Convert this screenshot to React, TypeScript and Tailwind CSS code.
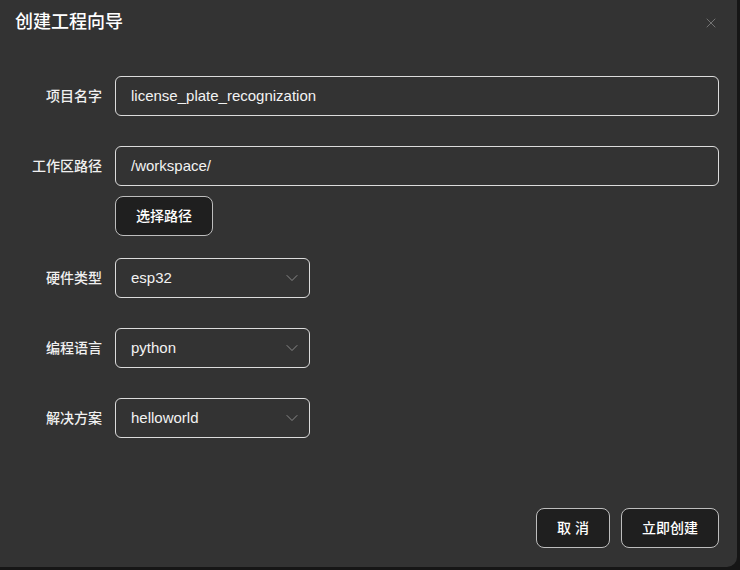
import { ChevronDown, X } from "lucide-react"

const font = "font-['Liberation_Sans','Noto_Sans_CJK_SC',sans-serif]"

function Label({ children }: { children: React.ReactNode }) {
  return (
    <div className="w-[102px] shrink-0 text-right text-[14px] font-medium text-[#f0f0f0]">
      {children}
    </div>
  )
}

function TextField({ value }: { value: string }) {
  return (
    <div className="flex h-[40px] w-[604px] items-center rounded-[6px] border border-[#dcdcdc] px-[15px] text-[15px] text-[#f2f2f2]">
      {value}
    </div>
  )
}

function SelectField({ value }: { value: string }) {
  return (
    <div className="flex h-[40px] w-[195px] items-center justify-between rounded-[6px] border border-[#dcdcdc] pl-[15px] pr-[7px] text-[15px] text-[#f2f2f2]">
      <span>{value}</span>
      <ChevronDown size={20} strokeWidth={1} className="text-[#9a9a9a]" />
    </div>
  )
}

function Button({ children, className }: { children: React.ReactNode; className?: string }) {
  return (
    <button
      className={`flex h-[40px] items-center justify-center rounded-[8px] border border-[#bdbdbd] bg-[#1f1f1f] text-[14px] font-medium text-white ${className ?? ""}`}>
      {children}
    </button>
  )
}

export default function App() {
  const selects = [
    { label: "硬件类型", value: "esp32" },
    { label: "编程语言", value: "python" },
    { label: "解决方案", value: "helloworld" },
  ]

  return (
    <div className={`h-[570px] w-[740px] bg-[#161616] ${font}`}>
      <div className="flex h-[567px] w-[737px] flex-col rounded-br-[10px] bg-[#333333]">
        <div className="flex h-[44px] items-center justify-between pl-[15px] pr-[18px]">
          <h2 className="pt-[1px] text-[18px] font-medium text-white">创建工程向导</h2>
          <X size={16} strokeWidth={1.1} className="mt-[2px] text-[#8a8a8a]" />
        </div>

        <div className="mt-[32px] flex flex-col">
          <div className="flex items-center gap-[13px]">
            <Label>项目名字</Label>
            <TextField value="license_plate_recognization" />
          </div>

          <div className="mt-[30px] flex items-center gap-[13px]">
            <Label>工作区路径</Label>
            <TextField value="/workspace/" />
          </div>
          <div className="mt-[10px] pl-[115px]">
            <Button className="w-[98px]">选择路径</Button>
          </div>

          <div className="mt-[22px] flex flex-col gap-[30px]">
            {selects.map((s) => (
              <div key={s.label} className="flex items-center gap-[13px]">
                <Label>{s.label}</Label>
                <SelectField value={s.value} />
              </div>
            ))}
          </div>
        </div>

        <div className="mt-auto flex justify-end gap-[11px] pb-[19px] pr-[18px]">
          <Button className="w-[74px]">取 消</Button>
          <Button className="w-[98px]">立即创建</Button>
        </div>
      </div>
    </div>
  )
}
